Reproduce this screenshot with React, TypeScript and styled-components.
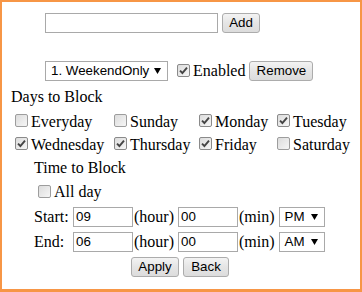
import * as React from 'react'
import styled, { createGlobalStyle } from 'styled-components'

const GlobalStyle = createGlobalStyle`
    html, body {
        margin: 0;
        padding: 0;
        background: #fff;
    }
    body {
        font-family: 'Liberation Serif', 'Times New Roman', serif;
        font-size: 16px;
        color: #000;
    }
`

const Frame = styled.div`
    box-sizing: border-box;
    width: 362px;
    height: 292px;
    border: 2px solid #f79646;
    border-bottom-width: 3px;
    background: #fff;
`

const Row = styled.div<{ $indent: number; $top?: number; $h: number }>`
    display: flex;
    align-items: center;
    height: ${(p) => p.$h}px;
    margin-left: ${(p) => p.$indent}px;
    margin-top: ${(p) => p.$top || 0}px;
    line-height: 18px;
    white-space: nowrap;
`

const ButtonRow = styled.div`
    display: flex;
    align-items: center;
    justify-content: center;
    gap: 4px;
    height: 25px;
    padding-right: 2px;
`

const TextBox = styled.div<{ $w: number }>`
    box-sizing: border-box;
    width: ${(p) => p.$w}px;
    height: 20px;
    border: 1px solid #a9a9a9;
    background: #fff;
    padding: 0 2px;
    font-family: 'Liberation Sans', Arial, sans-serif;
    font-size: 13.33px;
    line-height: 18px;
    color: #000;
`

const Button = styled.div<{ $w: number }>`
    box-sizing: border-box;
    width: ${(p) => p.$w}px;
    height: 20px;
    border: 1px solid #acacac;
    border-radius: 3px;
    background: linear-gradient(#f3f3f3, #e5e5e5 50%, #dcdcdc);
    font-family: 'Liberation Sans', Arial, sans-serif;
    font-size: 13.33px;
    line-height: 18px;
    text-align: center;
    color: #000;
`

const SelectBox = styled.div<{ $w: number }>`
    box-sizing: border-box;
    display: flex;
    align-items: center;
    justify-content: space-between;
    width: ${(p) => p.$w}px;
    height: 20px;
    border: 1px solid #a9a9a9;
    background: #fff;
    padding: 0 6px 0 5px;
    font-family: 'Liberation Sans', Arial, sans-serif;
    font-size: 13.33px;
    color: #000;
`

const Heading = styled.div<{ $indent: number; $top: number }>`
    margin: ${(p) => p.$top}px 0 0 ${(p) => p.$indent}px;
    height: 18px;
    line-height: 18px;
`

const DaysGrid = styled.div`
    display: grid;
    grid-template-columns: 99px 85px 78px auto;
    grid-auto-rows: 23px;
    margin: 4px 0 0 13px;
    line-height: 18px;
`

const Check = styled.label`
    display: flex;
    align-items: center;
    gap: 3px;
    white-space: nowrap;
`

const Box = styled.span<{ $checked: boolean }>`
    box-sizing: border-box;
    display: flex;
    align-items: center;
    justify-content: center;
    width: 13px;
    height: 13px;
    margin-bottom: 2px;
    border: 1px solid ${(p) => (p.$checked ? '#8a8a8a' : '#9d9d9d')};
    border-radius: 2px;
    background: linear-gradient(135deg, #dcdcdc, #f6f6f6);
`

const Label = styled.span<{ $w?: number }>`
    display: inline-block;
    width: ${(p) => (p.$w ? `${p.$w}px` : 'auto')};
`

const Unit = styled.span<{ $l: number; $r: number }>`
    margin: 0 ${(p) => p.$r}px 0 ${(p) => p.$l}px;
`

const CheckBox = ({ checked, label }: { checked: boolean; label: string }) => (
    <Check>
        <Box $checked={checked}>
            {checked && (
                <svg width="9" height="9" viewBox="0 0 9 9">
                    <path
                        d="M1 4.6 L3.4 7 L8 1.6"
                        fill="none"
                        stroke="#444"
                        strokeWidth="1.9"
                    />
                </svg>
            )}
        </Box>
        {label}
    </Check>
)

const Select = ({ value, width }: { value: string; width: number }) => (
    <SelectBox $w={width}>
        <span>{value}</span>
        <svg width="7" height="6" viewBox="0 0 7 6">
            <path d="M0 0 H7 L3.5 6 Z" fill="#000" />
        </svg>
    </SelectBox>
)

const days = [
    { name: 'Everyday', on: false },
    { name: 'Sunday', on: false },
    { name: 'Monday', on: true },
    { name: 'Tuesday', on: true },
    { name: 'Wednesday', on: true },
    { name: 'Thursday', on: true },
    { name: 'Friday', on: true },
    { name: 'Saturday', on: false },
]

const times = [
    { label: 'Start:', hour: '09', min: '00', ampm: 'PM' },
    { label: 'End:', hour: '06', min: '00', ampm: 'AM' },
]

const App: React.FC = () => (
    <>
        <GlobalStyle />
        <Frame>
            <Row $indent={43} $top={11} $h={20} style={{ gap: 4 }}>
                <TextBox $w={173} />
                <Button $w={38}>Add</Button>
            </Row>
            <Row $indent={43} $top={28} $h={20}>
                <Select value="1. WeekendOnly" width={123} />
                <span style={{ width: 9 }} />
                <CheckBox checked label="Enabled" />
                <span style={{ width: 4 }} />
                <Button $w={64}>Remove</Button>
            </Row>
            <Heading $indent={9} $top={7}>
                Days to Block
            </Heading>
            <DaysGrid>
                {days.map((d) => (
                    <CheckBox key={d.name} checked={d.on} label={d.name} />
                ))}
            </DaysGrid>
            <Row $indent={32} $h={24}>
                Time to Block
            </Row>
            <Row $indent={36} $h={24}>
                <CheckBox checked={false} label="All day" />
            </Row>
            {times.map((t) => (
                <Row key={t.label} $indent={32} $h={25}>
                    <Label $w={39}>{t.label}</Label>
                    <TextBox $w={60}>{t.hour}</TextBox>
                    <Unit $l={1} $r={4}>(hour)</Unit>
                    <TextBox $w={60}>{t.min}</TextBox>
                    <Unit $l={1} $r={4}>(min)</Unit>
                    <Select value={t.ampm} width={46} />
                </Row>
            ))}
            <ButtonRow>
                <Button $w={48}>Apply</Button>
                <Button $w={46}>Back</Button>
            </ButtonRow>
        </Frame>
    </>
)

export default App
